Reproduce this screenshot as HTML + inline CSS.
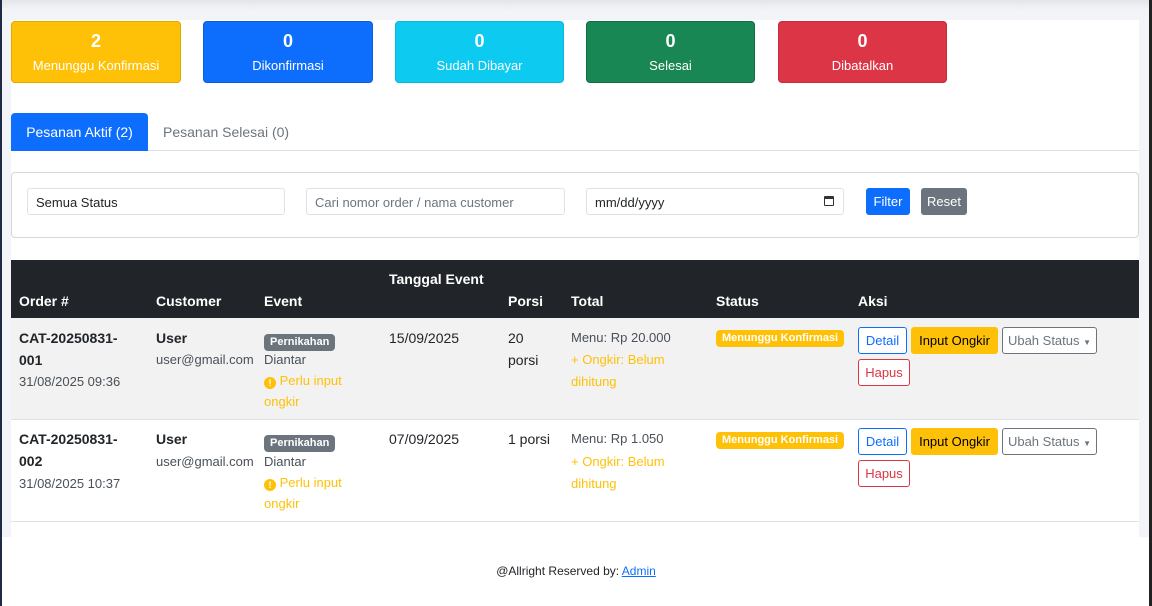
<!DOCTYPE html>
<html><head><meta charset="utf-8"><style>
*{box-sizing:border-box;margin:0;padding:0}
body{width:1152px;height:606px;overflow:hidden;background:#fff;font-family:"Liberation Sans",sans-serif;color:#212529;position:relative}
.a{position:absolute}
.card{position:absolute;top:21px;height:62px;width:170px;border-radius:4px;color:#fff;text-align:center}
.card b{display:block;font-size:18px;margin-top:9px;line-height:20px}
.card span{display:block;font-size:13px;margin-top:7px}
.inp{position:absolute;top:188px;height:27px;border:1px solid #dee2e6;border-radius:3px;background:#fff;font-size:13px;padding:6px 8px;color:#212529}
.th{position:absolute;color:#fff;font-weight:bold;font-size:14px}
.td{position:absolute;font-size:14px;line-height:22px}
.sm{font-size:13px;color:#495057}
.badge{display:inline-block;background:#6c757d;color:#fff;font-size:11px;font-weight:bold;padding:1px 6px;border-radius:4px;line-height:15px}
.bw{background:#ffc107;color:#fff;font-size:11px;font-weight:bold;padding:1px 6px;border-radius:4px;line-height:15px;position:absolute}
.btn{position:absolute;height:27px;border-radius:3px;font-size:13px;text-align:center;line-height:25px;border:1px solid}
.warn{color:#ffc107}
.ic{display:inline-block;width:12px;height:12px;border-radius:50%;background:#ffc107;color:#fff;font-size:9px;font-weight:bold;text-align:center;line-height:12px;vertical-align:-1px}
</style></head><body>
<div class="a" style="left:0;top:0;width:1152px;height:537px;background:#f3f4f8"></div>
<div class="a" style="left:0;top:0;width:1152px;height:10px;background:linear-gradient(#e4e5ea,#f3f4f8)"></div>
<div class="a" style="left:11px;top:20px;width:1128px;height:517px;background:#fff"></div>
<div class="a" style="left:0;top:0;width:2px;height:606px;background:#1f2a44"></div>
<div class="a" style="left:1149px;top:0;width:3px;height:606px;background:#222"></div>

<div class="card" style="left:11px;background:#ffc107;border:1px solid #e0a800"><b>2</b><span>Menunggu Konfirmasi</span></div>
<div class="card" style="left:203px;background:#0d6efd;border:1px solid #0b5ed7"><b>0</b><span>Dikonfirmasi</span></div>
<div class="card" style="left:395px;width:169px;background:#0dcaf0;border:1px solid #0bb7da"><b>0</b><span>Sudah Dibayar</span></div>
<div class="card" style="left:586px;width:169px;background:#198754;border:1px solid #146c43"><b>0</b><span>Selesai</span></div>
<div class="card" style="left:778px;width:169px;background:#dc3545;border:1px solid #c42e3c"><b>0</b><span>Dibatalkan</span></div>

<div class="a" style="left:11px;top:150px;width:1128px;height:1px;background:#dee2e6"></div>
<div class="a" style="left:11px;top:113px;width:137px;height:38px;background:#0d6efd;border-radius:4px 4px 0 0;color:#fff;font-size:14px;line-height:38px;text-align:center">Pesanan Aktif (2)</div>
<div class="a" style="left:163px;top:113px;font-size:14px;line-height:38px;color:#6c757d">Pesanan Selesai (0)</div>

<div class="a" style="left:11px;top:172px;width:1128px;height:66px;border:1px solid #d6d6d6;border-radius:4px"></div>
<div class="inp" style="left:27px;width:258px">Semua Status</div>
<div class="inp" style="left:306px;width:259px;color:#6c757d">Cari nomor order / nama customer</div>
<div class="inp" style="left:586px;width:258px">mm/dd/yyyy<span style="position:absolute;right:9px;top:7px;width:10px;height:10px;border:1.5px solid #333;border-top-width:3px;border-radius:1px"></span></div>
<div class="btn" style="left:866px;top:188px;width:44px;background:#0d6efd;border-color:#0d6efd;color:#fff">Filter</div>
<div class="btn" style="left:921px;top:188px;width:46px;background:#6c757d;border-color:#6c757d;color:#fff">Reset</div>

<div class="a" style="left:11px;top:260px;width:1128px;height:58px;background:#212529"></div>
<div class="th" style="left:19px;top:293px">Order #</div>
<div class="th" style="left:156px;top:293px">Customer</div>
<div class="th" style="left:264px;top:293px">Event</div>
<div class="th" style="left:389px;top:271px">Tanggal Event</div>
<div class="th" style="left:508px;top:293px">Porsi</div>
<div class="th" style="left:571px;top:293px">Total</div>
<div class="th" style="left:716px;top:293px">Status</div>
<div class="th" style="left:858px;top:293px">Aksi</div>

<div class="a" style="left:11px;top:318px;width:1128px;height:102px;background:#f2f2f2;border-bottom:1px solid #dee2e6"></div>
<div class="a" style="left:11px;top:521px;width:1128px;height:1px;background:#dee2e6"></div>

<!-- row 1 -->
<div class="td" style="left:19px;top:327px;font-weight:bold">CAT-20250831-<br>001</div>
<div class="td sm" style="left:19px;top:371px">31/08/2025 09:36</div>
<div class="td" style="left:156px;top:327px;font-weight:bold">User</div>
<div class="td sm" style="left:156px;top:349px">user@gmail.com</div>
<div class="td" style="left:264px;top:329px"><span class="badge">Pernikahan</span></div>
<div class="td sm" style="left:264px;top:349px">Diantar</div>
<div class="td sm warn" style="left:264px;top:370px;width:100px;line-height:21px;color:#ffc107"><span class="ic">!</span> Perlu input ongkir</div>
<div class="td" style="left:389px;top:327px">15/09/2025</div>
<div class="td" style="left:508px;top:327px">20<br>porsi</div>
<div class="td sm" style="left:571px;top:327px">Menu: Rp 20.000</div>
<div class="td sm warn" style="left:571px;top:349px;width:110px;color:#ffc107">+ Ongkir: Belum dihitung</div>
<div class="bw" style="left:716px;top:330px">Menunggu Konfirmasi</div>
<div class="btn" style="left:858px;top:327px;width:49px;border-color:#0d6efd;color:#0d6efd;background:#fff">Detail</div>
<div class="btn" style="left:911px;top:327px;width:87px;border-color:#ffc107;background:#ffc107;color:#000">Input Ongkir</div>
<div class="btn" style="left:1002px;top:327px;width:95px;border-color:#6c757d;color:#6c757d;background:#fff">Ubah Status <span style="font-size:8px">▼</span></div>
<div class="btn" style="left:858px;top:359px;width:52px;border-color:#dc3545;color:#dc3545;background:#fff">Hapus</div>

<!-- row 2 -->
<div class="td" style="left:19px;top:428px;font-weight:bold">CAT-20250831-<br>002</div>
<div class="td sm" style="left:19px;top:473px">31/08/2025 10:37</div>
<div class="td" style="left:156px;top:428px;font-weight:bold">User</div>
<div class="td sm" style="left:156px;top:451px">user@gmail.com</div>
<div class="td" style="left:264px;top:430px"><span class="badge">Pernikahan</span></div>
<div class="td sm" style="left:264px;top:451px">Diantar</div>
<div class="td sm warn" style="left:264px;top:472px;width:100px;line-height:21px;color:#ffc107"><span class="ic">!</span> Perlu input ongkir</div>
<div class="td" style="left:389px;top:428px">07/09/2025</div>
<div class="td" style="left:508px;top:428px">1 porsi</div>
<div class="td sm" style="left:571px;top:428px">Menu: Rp 1.050</div>
<div class="td sm warn" style="left:571px;top:451px;width:110px;color:#ffc107">+ Ongkir: Belum dihitung</div>
<div class="bw" style="left:716px;top:432px">Menunggu Konfirmasi</div>
<div class="btn" style="left:858px;top:428px;width:49px;border-color:#0d6efd;color:#0d6efd;background:#fff">Detail</div>
<div class="btn" style="left:911px;top:428px;width:87px;border-color:#ffc107;background:#ffc107;color:#000">Input Ongkir</div>
<div class="btn" style="left:1002px;top:428px;width:95px;border-color:#6c757d;color:#6c757d;background:#fff">Ubah Status <span style="font-size:8px">▼</span></div>
<div class="btn" style="left:858px;top:460px;width:52px;border-color:#dc3545;color:#dc3545;background:#fff">Hapus</div>

<div class="a" style="left:0;top:564px;width:1152px;text-align:center;font-size:12px;color:#212529">@Allright Reserved by: <span style="color:#0d6efd;text-decoration:underline">Admin</span></div>
</body></html>
